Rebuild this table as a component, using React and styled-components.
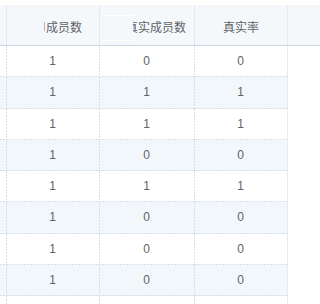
import React from 'react';
import styled, { createGlobalStyle } from 'styled-components';

const GlobalStyle = createGlobalStyle`
  html, body {
    margin: 0;
    padding: 0;
    background: #ffffff;
  }
  body {
    font-family: "Helvetica Neue", Helvetica, "Liberation Sans", "Noto Sans CJK SC", sans-serif;
    color: #606266;
  }
`;

const Wrapper = styled.div`
  width: 320px;
  height: 304px;
  overflow: hidden;
  padding-top: 5px;
  box-sizing: border-box;
`;

const HeaderRow = styled.div`
  display: flex;
  height: 41px;
  box-sizing: border-box;
  background: #f5f8fb;
  border-bottom: 1px solid #c9d6e3;
`;

const HeadCell = styled.div`
  position: relative;
  box-sizing: border-box;
  width: ${p => p.$w}px;
  flex: ${p => (p.$grow ? 1 : 'none')};
  border-left: ${p => (p.$first ? 'none' : '1px solid #e4eaf1')};
  display: flex;
  align-items: center;
  justify-content: center;
  padding-left: ${p => p.$pad || 0}px;
  padding-top: 3px;
  font-size: 12px;
  color: #606266;
  white-space: nowrap;
  overflow: hidden;
`;

// faint bar left over from a clipped glyph
const ClipBar = styled.span`
  display: inline-block;
  width: 1px;
  height: 9px;
  margin-right: 1px;
  background: #a9b8c8;
`;

// ghost box overlapping the second header label
const Ghost = styled.div`
  position: absolute;
  left: 2px;
  top: 10px;
  width: 31px;
  height: 24px;
  background: #f5f8fb;
  border-top: 1px solid #ffffff;
  border-bottom: 1px solid #ffffff;
`;

const BodyRow = styled.div`
  position: relative;
  display: flex;
  width: 288px;
  height: 31.25px;
  box-sizing: border-box;
  background: ${p => (p.$striped ? '#f2f7fc' : '#ffffff')};
  border-right: 1px solid #e6ebf1;

  &::after {
    content: '';
    position: absolute;
    left: 0;
    right: 0;
    bottom: 0;
    height: 1px;
    background: repeating-linear-gradient(90deg, #d9dfe7 0 2px, transparent 2px 3px);
  }
`;

const Cell = styled.div`
  position: relative;
  box-sizing: border-box;
  width: ${p => p.$w}px;
  display: flex;
  align-items: center;
  justify-content: center;
  padding-bottom: 1px;
  font-size: 12px;
  color: #606266;

  &::before {
    content: '';
    display: ${p => (p.$first ? 'none' : 'block')};
    position: absolute;
    left: 0;
    top: 0;
    bottom: 0;
    width: 1px;
    background: repeating-linear-gradient(180deg, #d9dfe7 0 2px, transparent 2px 3px);
  }
`;

const rows = [
  [1, 0, 0],
  [1, 1, 1],
  [1, 1, 1],
  [1, 0, 0],
  [1, 1, 1],
  [1, 0, 0],
  [1, 0, 0],
  [1, 0, 0],
  ['', '', ''],
];

const widths = [93, 95, 93];

const App = () => (
  <>
    <GlobalStyle />
    <Wrapper>
      <HeaderRow>
        <HeadCell $w={6} $first />
        <HeadCell $w={93} $pad={20}>
          <ClipBar />
          成员数
        </HeadCell>
        <HeadCell $w={95} $pad={18}>
          真实成员数
          <Ghost />
        </HeadCell>
        <HeadCell $w={93}>真实率</HeadCell>
        <HeadCell $grow />
      </HeaderRow>
      {rows.map((row, i) => (
        <BodyRow key={i} $striped={i % 2 === 1}>
          <Cell $w={6} $first />
          {row.map((v, j) => (
            <Cell key={j} $w={widths[j]}>
              {v}
            </Cell>
          ))}
        </BodyRow>
      ))}
    </Wrapper>
  </>
);

export default App;
